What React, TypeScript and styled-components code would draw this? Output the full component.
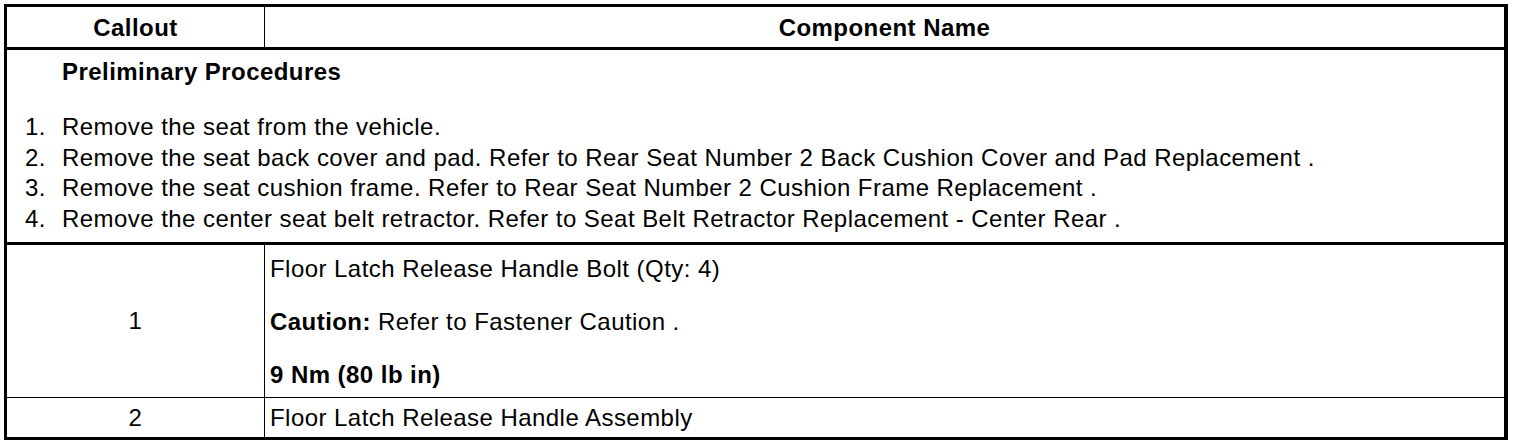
import React from 'react';
import styled, { createGlobalStyle } from 'styled-components';

const Global = createGlobalStyle`
  html, body { margin: 0; padding: 0; background: #fff; }
  body {
    font-family: "Liberation Sans", Arial, Helvetica, sans-serif;
    color: #000;
  }
`;

const Page = styled.div`
  padding: 4px 0 0 4px;
`;

const Table = styled.div`
  width: 1504px;
  box-sizing: border-box;
  border-style: solid;
  border-color: #000;
  border-width: 3px 4px 3px 3px;
  font-size: 24px;
  letter-spacing: 0.45px;
`;

const Row = styled.div<{ $h: number; $bottom: number }>`
  display: grid;
  grid-template-columns: 258px 1fr;
  height: ${(p) => p.$h}px;
  border-bottom: ${(p) => p.$bottom}px solid #000;
`;

const HeadCell = styled.div<{ $divider?: boolean }>`
  font-weight: bold;
  text-align: center;
  line-height: 39px;
  padding-top: 1px;
  border-right: ${(p) => (p.$divider ? '1px solid #000' : 'none')};
`;

const CalloutCell = styled.div`
  display: flex;
  align-items: center;
  justify-content: center;
  line-height: 28px;
  border-right: 1px solid #000;
`;

const NameCell = styled.div<{ $center?: boolean }>`
  display: flex;
  flex-direction: column;
  justify-content: ${(p) => (p.$center ? 'center' : 'flex-start')};
  gap: 25px;
  padding: ${(p) => (p.$center ? '0 5px' : '10px 5px 0')};
  line-height: 28px;
`;

const Prelim = styled.div`
  height: 184px;
  padding-top: 8px;
  border-bottom: 3px solid #000;
`;

const PrelimTitle = styled.div`
  font-weight: bold;
  line-height: 28px;
  padding-left: 55px;
`;

const Steps = styled.ol`
  list-style: none;
  margin: 26px 0 0;
  padding: 0 0 0 18px;
`;

const Step = styled.li`
  display: grid;
  grid-template-columns: 37px 1fr;
  line-height: 30.5px;
`;

const Line = styled.div``;

const Bold = styled.span`
  font-weight: bold;
`;

const steps = [
  'Remove the seat from the vehicle.',
  'Remove the seat back cover and pad. Refer to Rear Seat Number 2 Back Cushion Cover and Pad Replacement .',
  'Remove the seat cushion frame. Refer to Rear Seat Number 2 Cushion Frame Replacement .',
  'Remove the center seat belt retractor. Refer to Seat Belt Retractor Replacement - Center Rear .',
];

export default function App() {
  return (
    <>
      <Global />
      <Page>
        <Table>
          <Row $h={40} $bottom={3}>
            <HeadCell $divider>Callout</HeadCell>
            <HeadCell>Component Name</HeadCell>
          </Row>
          <Prelim>
            <PrelimTitle>Preliminary Procedures</PrelimTitle>
            <Steps>
              {steps.map((s, i) => (
                <Step key={i}>
                  <span>{i + 1}.</span>
                  <span>{s}</span>
                </Step>
              ))}
            </Steps>
          </Prelim>
          <Row $h={152} $bottom={1}>
            <CalloutCell>1</CalloutCell>
            <NameCell>
              <Line>Floor Latch Release Handle Bolt (Qty: 4)</Line>
              <Line>
                <Bold>Caution:</Bold> Refer to Fastener Caution .
              </Line>
              <Line>
                <Bold>9 Nm (80 lb in)</Bold>
              </Line>
            </NameCell>
          </Row>
          <Row $h={39} $bottom={0}>
            <CalloutCell>2</CalloutCell>
            <NameCell $center>Floor Latch Release Handle Assembly</NameCell>
          </Row>
        </Table>
      </Page>
    </>
  );
}
